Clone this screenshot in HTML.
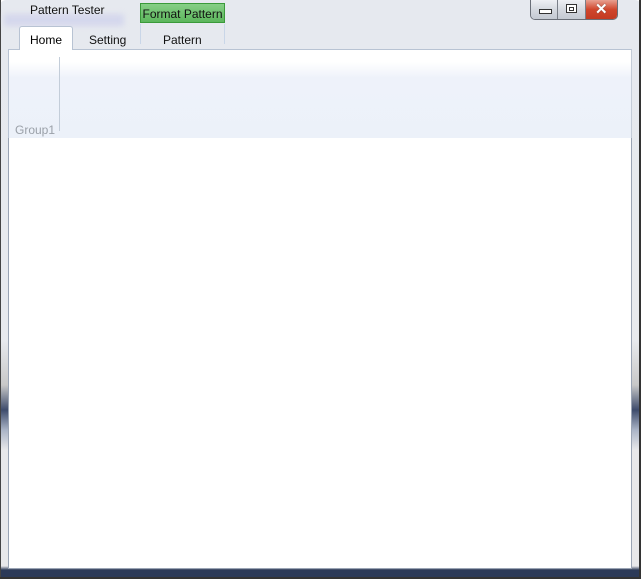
<!DOCTYPE html>
<html><head><meta charset="utf-8"><style>
body{margin:0;width:641px;height:579px;overflow:hidden;background:#fff;font-family:"Liberation Sans",sans-serif;}
.frame{position:absolute;left:0;top:0;width:641px;height:579px;background:linear-gradient(180deg,#e6e9ef 0,#e8eaee 340px,#c8c8c8 385px,#3e4c6c 410px,#aab4c6 430px,#e8e8ea 450px,#e8e8ea 566px,#2c3a58 570px,#2c3a58 579px);border-radius:6px 6px 4px 4px;}
.lb{position:absolute;left:0;top:0;width:1px;height:579px;background:#444}
.rb{position:absolute;right:0;top:0;width:2px;height:579px;background:#333}
.bb{position:absolute;left:0;bottom:0;width:641px;height:2px;background:#333}
.blur{position:absolute;left:4px;top:14px;width:120px;height:12px;background:#cdd0ec;filter:blur(3px);opacity:.7}
.title{position:absolute;left:30px;top:3px;font-size:12px;color:#111}
.fp{position:absolute;left:140px;top:3px;width:83px;height:18px;border:1px solid #3a9a3a;background:linear-gradient(180deg,#86cf86,#5cb65c);font-size:12px;color:#111;line-height:20px;text-align:center}
.ctxline{position:absolute;top:24px;width:1px;height:20px;background:#c9d6e8}
.tabs{position:absolute;top:26px;font-size:12px;color:#111}
.home{position:absolute;left:19px;top:26px;width:52px;height:23px;background:#fff;border:1px solid #b8c3d3;border-bottom:none;border-radius:3px 3px 0 0;text-align:center;line-height:27px;font-size:12px;z-index:2}
.ribbon{position:absolute;left:8px;top:49px;width:622px;height:88px;border:1px solid #b8c3d3;border-right:1px solid #c4ccd8;background:linear-gradient(180deg,#fff 0,#fff 12px,#eef2fa 28px,#ecf1f9 100%)}
.sep{position:absolute;left:59px;top:57px;width:1px;height:74px;background:#c3cdd9}
.g1{position:absolute;left:15px;top:123px;font-size:12px;color:#9aa0a8}
.content{position:absolute;left:8px;top:138px;width:622px;height:430px;background:#fff;border-left:1px solid #9aa4b4;border-right:1px solid #9aa4b4;border-bottom:1px solid #9aa4b4}
.btns{position:absolute;left:530px;top:0;width:86px;height:19px;border:1px solid #6a6f78;border-top:none;border-radius:0 0 5px 5px;overflow:hidden;display:flex}
.b{height:19px;background:linear-gradient(180deg,#eef0f4,#d5d9e0 50%,#c4c9d2);border-right:1px solid #7a7f88;position:relative}
.x{background:linear-gradient(180deg,#e8a090,#d0462c 50%,#c33a22);flex:1;border:none}
</style></head><body>
<div class="frame"></div><div class="lb"></div><div class="rb"></div><div class="bb"></div>
<div class="blur"></div>
<div class="title">Pattern Tester</div>
<div class="fp">Format Pattern</div>
<div class="ctxline" style="left:140px"></div><div class="ctxline" style="left:224px"></div>
<div class="btns">
 <div class="b" style="width:26px"><div style="position:absolute;left:8px;top:9px;width:11px;height:3px;border:1px solid #333;background:#fff"></div></div>
 <div class="b" style="width:27px"><div style="position:absolute;left:8px;top:4px;width:9px;height:7px;border:1px solid #333;background:#fff"><div style="margin:2px;height:2px;border:1px solid #333"></div></div></div>
 <div class="b x"><div style="position:absolute;left:9px;top:0;font-size:15px;font-weight:bold;color:#fff;line-height:19px;text-shadow:0 0 1px #444">✕</div></div>
</div>
<div class="ribbon"></div>
<div class="home">Home</div>
<div class="tabs" style="left:89px;top:33px">Setting</div>
<div class="tabs" style="left:163px;top:33px">Pattern</div>
<div class="sep"></div>
<div class="g1">Group1</div>
<div class="content"></div>
</body></html>
